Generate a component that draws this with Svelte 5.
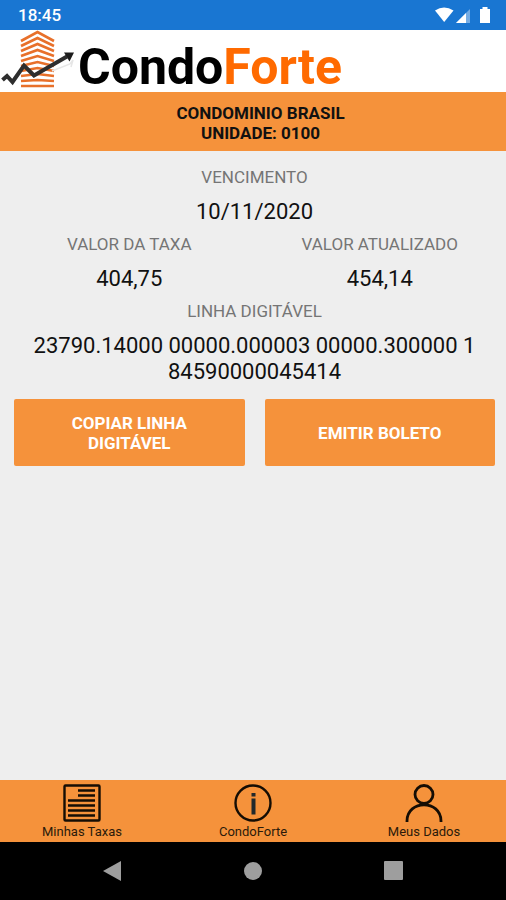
<script>
	const condominio = "CONDOMINIO BRASIL";
	const unidade = "0100";

	const boleto = {
		vencimento: "10/11/2020",
		valor: "404,75",
		atualizado: "454,14",
		linha: "23790.14000 00000.000003 00000.300000 1 84590000045414",
	};

	// [peak, side] heights of the building's floors in the logo
	const floors = [
		[2, 11], [8, 16], [14, 21], [20, 26], [26, 31],
		[32, 36], [38, 41], [44, 46], [50, 51], [56, 56],
	];

	function copiarLinha() {
		navigator.clipboard?.writeText(boleto.linha);
	}
</script>

<div class="app">
	<div class="status-bar">
		<span>18:45</span>
		<svg width="58" height="18" viewBox="0 0 58 18" fill="#fff" aria-hidden="true">
			<path d="M1 4.500Q10 -1.500 19.500 4.500L10.200 16Z" />
			<path d="M22 17L36 3V17Z" opacity="0.4" />
			<path d="M22 17L32 7V17Z" />
			<path d="M46 3H48.500V1H53.500V3H56V17H46Z" />
		</svg>
	</div>

	<header class="logo">
		<svg width="78" height="62" viewBox="0 0 78 62" fill="none" aria-hidden="true">
			{#each floors as [peak, side]}
				<path d="M21 {side}L37.500 {peak}L54 {side}" stroke="#e8702a" stroke-width="2.600" />
			{/each}
			<path d="M52 41L70 34L73 30L71 37" stroke="#e6e6e6" stroke-width="1.500" />
			<path d="M2.500 50L7 46L12.500 52L24 35.500L34 45.500L67 26.500" stroke="#2e2e2e" stroke-width="4" />
			<path d="M64 22.500L74 22.500L69.500 31.500Z" fill="#1c1c1c" />
		</svg>
		<h1>Condo<span>Forte</span></h1>
	</header>

	<div class="unit">
		{condominio}<br />UNIDADE: {unidade}
	</div>

	<main>
		<dl>
			<div class="wide">
				<dt>VENCIMENTO</dt>
				<dd>{boleto.vencimento}</dd>
			</div>
			<div>
				<dt>VALOR DA TAXA</dt>
				<dd>{boleto.valor}</dd>
			</div>
			<div>
				<dt>VALOR ATUALIZADO</dt>
				<dd>{boleto.atualizado}</dd>
			</div>
			<div class="wide">
				<dt>LINHA DIGITÁVEL</dt>
				<dd>{boleto.linha}</dd>
			</div>
		</dl>
		<div class="actions">
			<button on:click={copiarLinha}>COPIAR LINHA<br />DIGITÁVEL</button>
			<button>EMITIR BOLETO</button>
		</div>
	</main>

	<nav class="tabs">
		<a href="#taxas">
			<svg width="38" height="38" viewBox="0 0 38 38" fill="none" stroke="#150d04" stroke-width="2.400" aria-hidden="true">
				<rect x="1.500" y="1.500" width="35" height="35" rx="1" />
				<path d="M15 6.500H32M15 11.500H32M5 16.500H32M5 21.500H32M5 26.500H32M5 31.500H32" />
			</svg>
			Minhas Taxas
		</a>
		<a href="#condoforte">
			<svg width="38" height="38" viewBox="0 0 38 38" fill="none" stroke="#150d04" stroke-width="2.400" aria-hidden="true">
				<circle cx="19" cy="19" r="17.500" />
				<path d="M19.500 9V12.500M19.500 14.500V30.500" stroke="#22292b" stroke-width="4" />
			</svg>
			CondoForte
		</a>
		<a href="#dados">
			<svg width="38" height="38" viewBox="0 0 38 38" fill="none" stroke="#150d04" stroke-width="2.800" aria-hidden="true">
				<circle cx="19" cy="10.500" r="9" />
				<path d="M2 38.500V37C2 15.500 36 15.500 36 37V38.500" />
			</svg>
			Meus Dados
		</a>
	</nav>

	<div class="system-bar">
		<button aria-label="Voltar">
			<svg width="20" height="20" viewBox="0 0 20 20"><path d="M0 10L18 0V20Z" /></svg>
		</button>
		<button aria-label="Início">
			<svg width="20" height="20" viewBox="0 0 20 20"><circle cx="10" cy="10" r="9" /></svg>
		</button>
		<button aria-label="Recentes">
			<svg width="20" height="20" viewBox="0 0 20 20"><rect x="1" width="19" height="19" rx="1" /></svg>
		</button>
	</div>
</div>

<style>
	:global(body) {
		margin: 0;
	}

	.app {
		min-height: 100vh;
		display: flex;
		flex-direction: column;
		background: #eeeeee;
		color: #111;
		font-family: Roboto, sans-serif;
	}

	.status-bar {
		height: 30px;
		padding: 0 14px 0 18px;
		display: flex;
		align-items: center;
		justify-content: space-between;
		background: #1976d2;
		color: #fff;
		font-size: 17px;
		font-weight: 500;
	}

	.logo {
		height: 62px;
		display: flex;
		align-items: center;
		background: #fff;
	}

	h1 {
		margin: 12px 0 0;
		color: #000;
		font-size: 50px;
		font-weight: bold;
		line-height: 52px;
	}

	h1 span {
		color: #ff6a00;
	}

	.unit {
		padding: 11px 0 8px 15px;
		background: #f5923b;
		font-size: 17px;
		font-weight: bold;
		line-height: 20px;
		text-align: center;
	}

	main {
		flex: 1;
		padding: 16px 11px 16px 14px;
	}

	dl {
		margin: 0;
		display: grid;
		grid-template-columns: 1fr 1fr;
		gap: 9px 20px;
		text-align: center;
	}

	.wide {
		grid-column: span 2;
	}

	dt {
		margin-bottom: 12px;
		color: #757575;
		font-size: 17px;
		line-height: 20px;
	}

	dd {
		margin: 0;
		font-size: 22px;
		line-height: 26px;
	}

	.actions {
		margin-top: 14px;
		display: grid;
		grid-template-columns: 1fr 1fr;
		gap: 20px;
	}

	.actions button {
		min-height: 67px;
		border: none;
		border-radius: 2px;
		background: #f5923b;
		color: #fff;
		font-family: inherit;
		font-size: 17px;
		font-weight: bold;
		line-height: 20px;
	}

	.tabs {
		display: grid;
		grid-template-columns: repeat(3, 1fr);
		gap: 7px;
		background: #f5923b;
	}

	.tabs a {
		padding: 4px 0 2px;
		display: flex;
		flex-direction: column;
		align-items: center;
		gap: 2px;
		color: #2b1a0a;
		font-size: 13px;
		line-height: 16px;
		text-decoration: none;
	}

	.system-bar {
		height: 58px;
		padding: 0 43px;
		display: grid;
		grid-template-columns: repeat(3, 1fr);
		align-items: center;
		background: #000;
	}

	.system-bar button {
		padding: 0;
		border: none;
		background: none;
	}

	.system-bar svg {
		display: block;
		margin: 0 auto;
		fill: #9e9e9e;
	}
</style>
